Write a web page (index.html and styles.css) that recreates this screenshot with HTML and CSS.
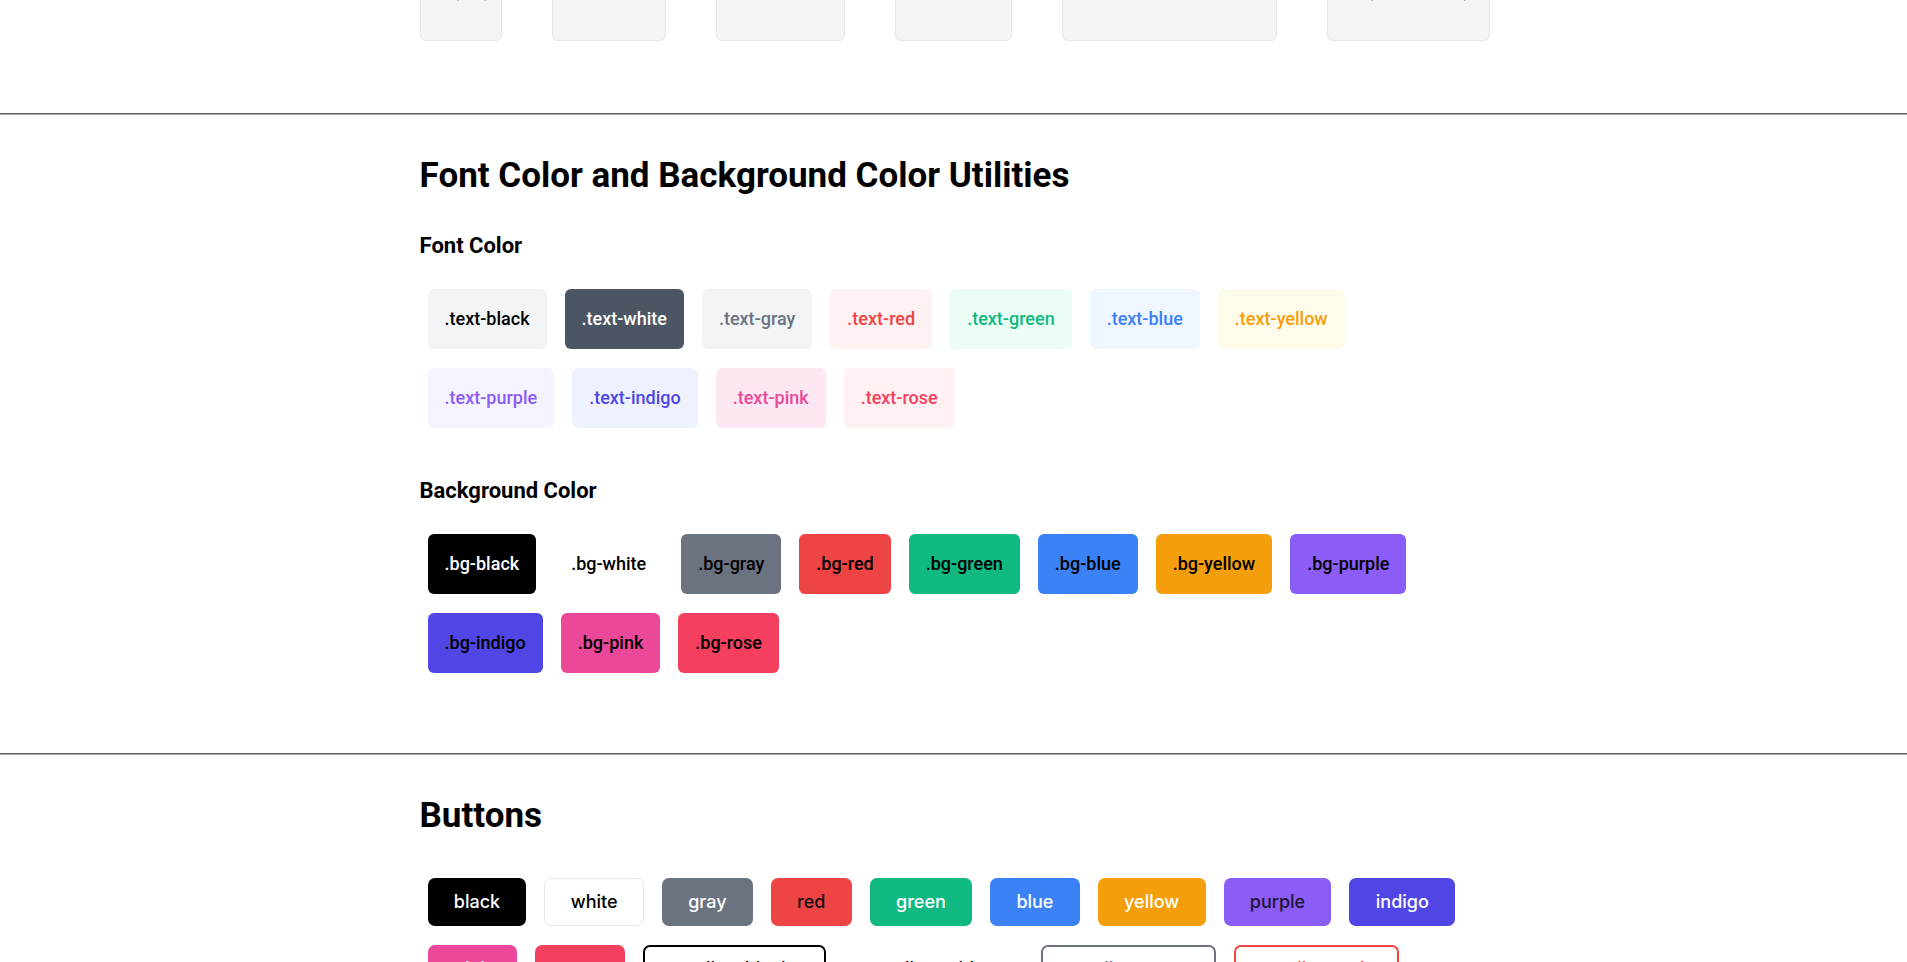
FILE: index.html
```html
<!DOCTYPE html>
<html lang="en">
<head>
<meta charset="utf-8">
<title>Utilities</title>
<link rel="stylesheet" href="styles.css">
</head>
<body>
<section class="section section-first">
  <div class="container">
    <div class="pad-row">
      <div class="pad-box pad-box-1">p-1 (4px)</div>
      <div class="pad-box pad-box-2"></div>
      <div class="pad-box pad-box-3"></div>
      <div class="pad-box pad-box-4"></div>
      <div class="pad-box pad-box-5"></div>
      <div class="pad-box pad-box-6">py-4 (16px vertical)</div>
    </div>
  </div>
</section>
<hr class="divider">
<section class="section">
  <div class="container">
    <h2 class="title">Font Color and Background Color Utilities</h2>
    <h3 class="sub">Font Color</h3>
    <div class="chips">
      <span class="chip fc-black">.text-black</span>
      <span class="chip fc-white">.text-white</span>
      <span class="chip fc-gray">.text-gray</span>
      <span class="chip fc-red">.text-red</span>
      <span class="chip fc-green">.text-green</span>
      <span class="chip fc-blue">.text-blue</span>
      <span class="chip fc-yellow">.text-yellow</span>
      <span class="chip fc-purple">.text-purple</span>
      <span class="chip fc-indigo">.text-indigo</span>
      <span class="chip fc-pink">.text-pink</span>
      <span class="chip fc-rose">.text-rose</span>
    </div>
    <h3 class="sub sub-next">Background Color</h3>
    <div class="chips">
      <span class="chip bgc-black">.bg-black</span>
      <span class="chip bgc-white">.bg-white</span>
      <span class="chip bgc-gray">.bg-gray</span>
      <span class="chip bgc-red">.bg-red</span>
      <span class="chip bgc-green">.bg-green</span>
      <span class="chip bgc-blue">.bg-blue</span>
      <span class="chip bgc-yellow">.bg-yellow</span>
      <span class="chip bgc-purple">.bg-purple</span>
      <span class="chip bgc-indigo">.bg-indigo</span>
      <span class="chip bgc-pink">.bg-pink</span>
      <span class="chip bgc-rose">.bg-rose</span>
    </div>
  </div>
</section>
<hr class="divider">
<section class="section">
  <div class="container">
    <h2 class="title">Buttons</h2>
    <div class="chips btn-group">
      <button class="btn btn-black">black</button>
      <button class="btn btn-white">white</button>
      <button class="btn btn-gray">gray</button>
      <button class="btn btn-red">red</button>
      <button class="btn btn-green">green</button>
      <button class="btn btn-blue">blue</button>
      <button class="btn btn-yellow">yellow</button>
      <button class="btn btn-purple">purple</button>
      <button class="btn btn-indigo">indigo</button>
      <button class="btn btn-pink">pink</button>
      <button class="btn btn-rose">rose</button>
      <button class="btn btn-outline btn-o-black">outline-black</button>
      <button class="btn btn-outline btn-o-white">outline-white</button>
      <button class="btn btn-outline btn-o-gray">outline-gray</button>
      <button class="btn btn-outline btn-o-red">outline-red</button>
    </div>
  </div>
</section>
</body>
</html>
```
FILE: styles.css
```css
html, body {
  margin: 0;
  padding: 0;
  background: #ffffff;
  color: #000000;
  font-family: Roboto, "Liberation Sans", sans-serif;
}

.section {
  padding: 40px 0 72px;
}

.section-first {
  padding-top: 0;
  margin-top: -100px;
}

.container {
  margin: 0 22%;
}

.divider {
  margin: 0;
  border: 0;
  border-top: 1px solid #5e5e5e;
  border-bottom: 1px solid #a8a8a8;
  height: 0;
}

/* top padding demo row (scrolled out of view) */
.pad-row {
  display: flex;
  gap: 50px;
  align-items: stretch;
}

.pad-box {
  height: 141px;
  box-sizing: border-box;
  flex: none;
  background: #f3f4f6;
  border: 1px solid #e5e7eb;
  border-radius: 6px;
  font-size: 16px;
  line-height: 24px;
  padding: 20px 6px 6px;
  white-space: nowrap;
  overflow: hidden;
}

.pad-box-1 { width: 82px; padding-top: 79px; }
.pad-box-2 { width: 114px; }
.pad-box-3 { width: 129px; }
.pad-box-4 { width: 117px; }
.pad-box-5 { width: 215px; }
.pad-box-6 { width: 163px; padding-top: 79px; }

.title {
  font-size: 35px;
  line-height: 42px;
  font-weight: 700;
  margin: 0 0 34px;
}

.sub {
  font-size: 22px;
  line-height: 30px;
  font-weight: 700;
  margin: 0 0 28px;
}

.sub-next {
  margin-top: 48px;
}

.chips {
  display: flex;
  flex-wrap: wrap;
  gap: 19px 18px;
  margin: 8px 0 8px 8px;
}

.btn-group {
  margin-top: 41px;
}

.chip {
  display: block;
  padding: 17px;
  font-size: 18px;
  line-height: 26px;
  font-weight: 500;
  border-radius: 6px;
}

.fc-black { background: #f3f4f6; color: #000000; }
.fc-white { background: #4b5563; color: #ffffff; }
.fc-gray { background: #f3f4f6; color: #6b7280; }
.fc-red { background: #fef2f2; color: #ef4444; }
.fc-green { background: #ecfdf5; color: #10b981; }
.fc-blue { background: #eff6ff; color: #3b82f6; }
.fc-yellow { background: #fffbeb; color: #f59e0b; }
.fc-purple { background: #f5f3ff; color: #8b5cf6; }
.fc-indigo { background: #eef2ff; color: #4f46e5; }
.fc-pink { background: #fce7f3; color: #ec4899; }
.fc-rose { background: #fff1f2; color: #f43f5e; }

.bgc-black { background: #000000; color: #ffffff; }
.bgc-white { background: #ffffff; color: #000000; }
.bgc-gray { background: #6b7280; color: #000000; }
.bgc-red { background: #ef4444; color: #000000; }
.bgc-green { background: #10b981; color: #000000; }
.bgc-blue { background: #3b82f6; color: #000000; }
.bgc-yellow { background: #f59e0b; color: #000000; }
.bgc-purple { background: #8b5cf6; color: #000000; }
.bgc-indigo { background: #4f46e5; color: #000000; }
.bgc-pink { background: #ec4899; color: #000000; }
.bgc-rose { background: #f43f5e; color: #000000; }

.btn {
  font-family: Inter, "Noto Sans", sans-serif;
  font-size: 18px;
  line-height: 28px;
  font-weight: 500;
  padding: 8px 24.3px;
  border: 2px solid transparent;
  border-radius: 7px;
  cursor: pointer;
}

.btn-outline {
  padding-left: 33px;
  padding-right: 33px;
}

.btn-black { background: #000000; color: #ffffff; }
.btn-white { background: #ffffff; color: #000000; border: 1px solid #e5e7eb; padding: 9px 25.3px; }
.btn-gray { background: #6b7280; color: #ffffff; }
.btn-red { background: #ef4444; color: #111111; }
.btn-green { background: #10b981; color: #ffffff; }
.btn-blue { background: #3b82f6; color: #ffffff; }
.btn-yellow { background: #f59e0b; color: #ffffff; }
.btn-purple { background: #8b5cf6; color: #1e1433; }
.btn-indigo { background: #4f46e5; color: #ffffff; }
.btn-pink { background: #ec4899; color: #ffffff; }
.btn-rose { background: #f43f5e; color: #ffffff; }
.btn-o-black { background: #ffffff; color: #000000; border-color: #000000; }
.btn-o-white { background: #ffffff; color: #000000; border-color: #ffffff; padding-left: 31px; padding-right: 31px; }
.btn-o-gray { background: #ffffff; color: #6b7280; border-color: #6b7280; }
.btn-o-red { background: #ffffff; color: #ef4444; border-color: #ef4444; }
```
